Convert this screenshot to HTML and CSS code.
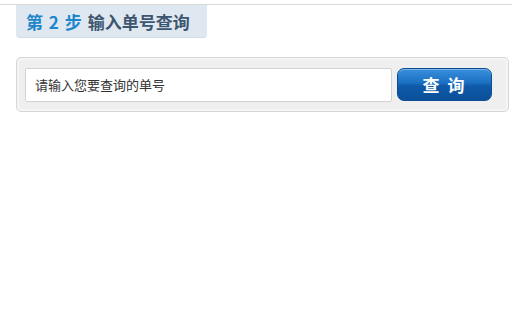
FILE: index.html
```html
<!DOCTYPE html>
<html lang="zh-CN">
<head>
<meta charset="utf-8">
<title>输入单号查询</title>
<link rel="stylesheet" href="styles.css">
</head>
<body>
<div class="page">
  <div class="step-tab"><span class="step-num">第 2 步</span><span class="step-title">输入单号查询</span></div>
  <div class="search-panel">
    <div class="search-input">请输入您要查询的单号</div>
    <button class="search-btn">查 询</button>
  </div>
</div>
</body>
</html>
```

FILE: styles.css
```css
html, body {
  margin: 0;
  padding: 0;
  background: #ffffff;
}
body {
  font-family: "Noto Sans CJK SC", "Noto Sans", sans-serif;
}
.page {
  margin-top: 4px;
  border-top: 1px solid #d9d9d9;
  padding: 0 3px 0 16px;
}
.step-tab {
  display: inline-flex;
  align-items: center;
  gap: 6px;
  height: 33px;
  width: 191px;
  box-sizing: border-box;
  padding-left: 10px;
  background: #dfe8f1;
  border-bottom: 1px solid #cfdbe7;
  border-radius: 0 0 4px 4px;
  font-size: 17px;
  font-weight: bold;
  line-height: 1;
}
.step-num { color: #1f86cc; word-spacing: 2px; }
.step-title { color: #3d5670; }
.search-panel {
  margin-top: 19px;
  height: 55px;
  box-sizing: border-box;
  background: #efefef;
  border: 1px solid #d6d6d6;
  border-radius: 5px;
  box-shadow: inset 0 0 0 2px #f5f5f5;
  display: flex;
  align-items: center;
  padding: 0 16px 0 8px;
  gap: 5px;
}
.search-input {
  flex: 1;
  height: 34px;
  box-sizing: border-box;
  background: #fff;
  border: 1px solid #d2d2d2;
  border-radius: 2px;
  padding-left: 9px;
  display: flex;
  align-items: center;
  font-size: 13px;
  color: #333;
}
.search-btn {
  width: 95px;
  height: 33px;
  border: 1px solid #0c4d94;
  border-radius: 7px;
  background: linear-gradient(#3a8fdc 0%, #1a6fc2 45%, #0f5aa8 55%, #0b4f99 100%);
  box-shadow: inset 0 1px 0 rgba(255,255,255,0.35);
  color: #fff;
  font-family: "Noto Sans CJK SC", sans-serif;
  font-size: 17px;
  font-weight: bold;
  letter-spacing: 2px;
  padding: 0;
}
```
